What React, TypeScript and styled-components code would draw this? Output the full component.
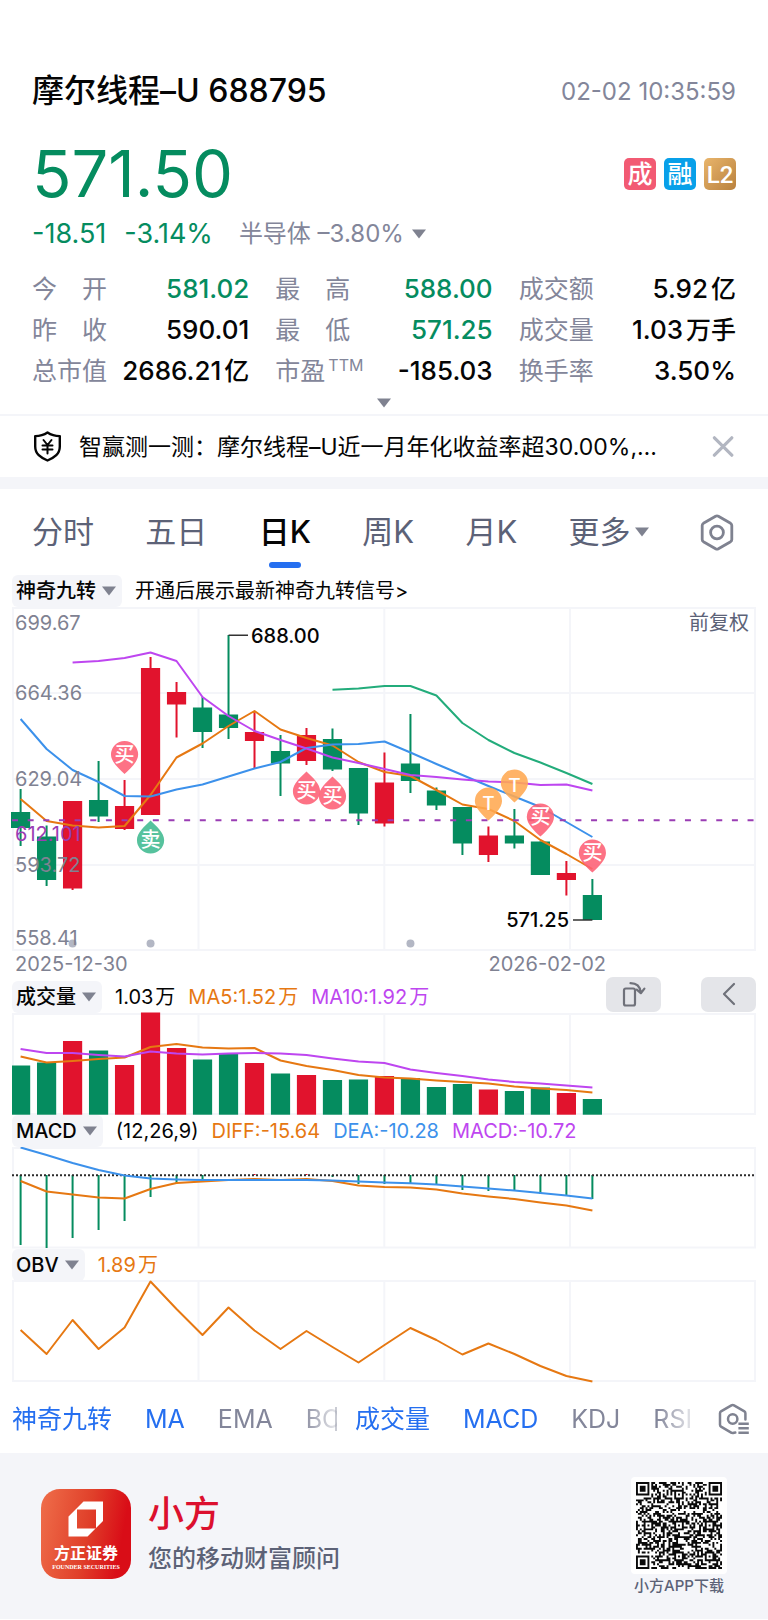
import React from "react";
import styled, { createGlobalStyle, css } from "styled-components";

const UP = "#e1132d";
const DOWN = "#058c5f";
const ORANGE = "#e67812";
const BLUE = "#3c91eb";
const PURPLE = "#be46f0";
const TEAL = "#23ac7b";
const GRAY = "#83869a";
const SLATE = "#5c6277";
const LINK = "#256ff0";
const GRID = "#f4f5f9";

const Global = createGlobalStyle`
  *, *::before, *::after { box-sizing: border-box; }
  body { margin: 0; background: #fff; }
  body, button, select {
    font-family: Inter, "Noto Sans CJK SC", sans-serif;
  }
  button, select {
    margin: 0; padding: 0; border: 0; background: none; color: inherit;
    font-size: inherit; line-height: inherit; font-weight: inherit; cursor: pointer;
  }
  h1, p, dl, dd, dt { margin: 0; font-weight: inherit; }
`;

const Page = styled.main`
  background: #fff;
  color: #050505;
`;

const Row = styled.div`
  display: flex;
  align-items: center;
  justify-content: space-between;
`;

/* ---------- quote header ---------- */

const Quote = styled.section`
  padding: 71px 32px 0;
`;

const StockName = styled.h1`
  font-size: 32px;
  line-height: 40px;
  font-weight: 500;
`;

const Stamp = styled.time`
  font-size: 24px;
  color: ${GRAY};
`;

const PriceRow = styled(Row)`
  margin-top: 27px;
`;

const Price = styled.p`
  font-size: 65px;
  line-height: 72px;
  color: ${DOWN};
`;

const Tags = styled.div`
  display: flex;
  gap: 8px;
`;

const Tag = styled.span<{ $bg: string; $narrow?: boolean }>`
  width: 32px;
  height: 32px;
  border-radius: 5px;
  background: ${(p) => p.$bg};
  color: #fff;
  font-size: 25px;
  line-height: 32px;
  font-weight: 500;
  text-align: center;
  ${(p) =>
    p.$narrow &&
    css`
      font-family: Roboto, sans-serif;
      font-size: 24px;
      line-height: 34px;
    `}
`;

const ChangeRow = styled.div`
  display: flex;
  align-items: center;
  margin-top: 7px;
  font-size: 27px;
  line-height: 34px;
  color: ${DOWN};
  gap: 18px;
`;

const Industry = styled.button`
  display: flex;
  align-items: center;
  gap: 8px;
  margin-left: 8px;
  font-size: 24px;
  color: ${GRAY};
`;

const Stats = styled.dl`
  display: grid;
  grid-template-columns: repeat(3, 1fr);
  gap: 5px 26px;
  margin-top: 20px;
`;

const Stat = styled.div`
  display: flex;
  justify-content: space-between;
  line-height: 36px;
  white-space: nowrap;
`;

const StatLabel = styled.dt`
  font-size: 25px;
  color: ${GRAY};
  sup {
    font-size: 16px;
    line-height: 0;
    margin-left: 3px;
  }
`;

const StatValue = styled.dd<{ $down?: boolean }>`
  font-size: 26px;
  font-weight: 500;
  color: ${(p) => (p.$down ? DOWN : "#050505")};
`;

const StatUnit = styled.span`
  font-size: 25px;
  margin-left: 3px;
`;

const Expand = styled.button`
  display: flex;
  align-items: center;
  justify-content: center;
  width: 100%;
  height: 25px;
  padding-top: 2px;
`;

/* ---------- notice ---------- */

const Notice = styled.aside`
  display: flex;
  align-items: center;
  height: 63px;
  padding: 0 34px 0 32px;
  border-top: 2px solid ${GRID};
`;

const NoticeText = styled.p`
  flex: 1;
  min-width: 0;
  margin: 0 40px 0 16px;
  font-size: 23px;
  line-height: 36px;
  white-space: nowrap;
  overflow: hidden;
  text-overflow: ellipsis;
`;

const IconButton = styled.button`
  display: flex;
  flex: none;
`;

const Strip = styled.hr`
  height: 12px;
  margin: 0;
  border: 0;
  background: ${GRID};
`;

/* ---------- period tabs ---------- */

const Tabs = styled.nav`
  display: flex;
  justify-content: space-between;
  padding: 21px 34px 7px 32px;
`;

const Tab = styled.button<{ $active?: boolean }>`
  position: relative;
  display: flex;
  align-items: center;
  gap: 4px;
  height: 58px;
  padding-bottom: 14px;
  font-size: 31px;
  line-height: 44px;
  color: ${SLATE};
  ${(p) =>
    p.$active &&
    css`
      color: #050505;
      font-weight: 500;
      &::after {
        content: "";
        position: absolute;
        left: calc(50% - 16px);
        bottom: 0;
        width: 32px;
        height: 6px;
        border-radius: 3px;
        background: ${LINK};
      }
    `}
`;

/* ---------- charts ---------- */

const Charts = styled.section`
  padding: 0 12px;
`;

const PanelHead = styled.div`
  display: flex;
  align-items: center;
  gap: 13px;
  height: 32px;
  font-size: 20px;
  line-height: 30px;
  white-space: nowrap;
`;

const Chip = styled.label`
  position: relative;
  display: flex;
  align-items: center;
  height: 32px;
  border-radius: 6px;
  background: ${GRID};
  select {
    appearance: none;
    field-sizing: content;
    height: 32px;
    padding: 0 26px 0 4px;
    font-size: 20px;
    font-weight: 500;
    color: #050505;
  }
  svg {
    position: absolute;
    right: 6px;
    pointer-events: none;
  }
`;

const Reading = styled.span<{ $color?: string }>`
  color: ${(p) => p.$color || "#050505"};
`;

const Unit = styled.span`
  margin-left: 2px;
`;

const Promo = styled.a`
  color: #050505;
  text-decoration: none;
`;

const ChartTools = styled.div`
  display: flex;
  gap: 40px;
  margin-left: auto;
`;

const ToolButton = styled.button`
  display: flex;
  align-items: center;
  justify-content: center;
  width: 55px;
  height: 35px;
  margin-top: -6px;
  border-radius: 7px;
  background: #e4e5e9;
`;

const Plot = styled.svg`
  display: block;
  width: 100%;
  height: auto;
  overflow: visible;
  font-family: Inter, "Noto Sans CJK SC", sans-serif;
`;

/* ---------- indicator picker ---------- */

const Picker = styled.div`
  display: grid;
  grid-template-columns: 17fr 18fr auto;
  align-items: center;
  height: 70px;
  padding: 2px 18px 0 12px;
  font-size: 25px;
  line-height: 36px;
`;

const PickerGroup = styled.div<{ $divided?: boolean }>`
  min-width: 0;
  ${(p) =>
    p.$divided
      ? css`
          margin-right: 18px;
          background: linear-gradient(#c9cbd3, #c9cbd3) right center / 2px 24px no-repeat;
        `
      : css`
          margin-right: 25px;
        `}
`;

const Scroller = styled.div`
  display: flex;
  gap: 33px;
  overflow: hidden;
  mask-image: linear-gradient(to right, #000 calc(100% - 36px), transparent calc(100% + 8px));
`;

const PickerItem = styled.button<{ $on?: boolean }>`
  flex: none;
  color: ${(p) => (p.$on ? LINK : GRAY)};
`;

/* ---------- footer ---------- */

const Footer = styled.footer`
  display: flex;
  align-items: flex-start;
  padding: 24px 41px 22px;
  background: ${GRID};
`;

const Logo = styled.div`
  display: flex;
  flex-direction: column;
  align-items: center;
  width: 90px;
  height: 90px;
  margin-top: 12px;
  padding-top: 12px;
  border-radius: 19px;
  background: linear-gradient(100deg, #ef6e4a, #e0402a 50%, #d90d17 85%);
  color: #fff;
`;

const LogoName = styled.span`
  margin-top: 6px;
  font-size: 16px;
  line-height: 20px;
  font-weight: 700;
`;

const LogoLatin = styled.span`
  font-family: "Liberation Serif", serif;
  font-size: 6px;
  line-height: 8px;
  font-weight: 700;
`;

const Brand = styled.div`
  margin: 16px 0 0 17px;
`;

const BrandName = styled.p`
  font-size: 36px;
  line-height: 42px;
  font-weight: 500;
  color: #dc102e;
`;

const Slogan = styled.p`
  margin-top: 8px;
  font-size: 24px;
  line-height: 32px;
  color: ${SLATE};
  font-weight: 500;
`;

const QrBlock = styled.div`
  display: flex;
  flex-direction: column;
  align-items: center;
  margin-left: auto;
`;

const QrFrame = styled.div`
  padding: 5px;
  border-radius: 4px;
  background: #fff;
  svg {
    display: block;
  }
`;

const QrCaption = styled.p`
  margin-top: 1px;
  font-size: 15px;
  line-height: 22px;
  font-weight: 500;
  color: ${SLATE};
`;

/* ---------- icons ---------- */

const Caret = () => (
  <svg width="14" height="10" viewBox="0 0 14 10" aria-hidden="true">
    <path d="M0 0.5h14L7 9.5z" fill="#7f8290" />
  </svg>
);

const ShieldIcon = () => (
  <svg width="31" height="32" viewBox="0 0 31 32" fill="none" stroke="#050505" strokeWidth="2.4" strokeLinejoin="round" strokeLinecap="round" aria-hidden="true">
    <path d="M15.5 1.5 C12 3.9 7.5 5.1 3.2 5.1 V15.5 C3.2 23 8.5 26.5 15.5 29.5 C22.5 26.5 27.8 23 27.8 15.5 V5.1 C23.5 5.1 19 3.9 15.5 1.5z" />
    <path d="M11.5 9l4 5 4-5M10.5 14.5h10M10.5 18.5h10M15.5 14.5v8" strokeWidth="2" />
  </svg>
);

const CloseIcon = () => (
  <svg width="22" height="22" viewBox="0 0 22 22" stroke="#b2b6c1" strokeWidth="3.2" strokeLinecap="round" aria-hidden="true">
    <path d="M2.4 1.8l17.4 17.4M19.8 1.8L2.4 19.2" />
  </svg>
);

const HexIcon = () => (
  <svg width="34" height="37" viewBox="0 0 34 37" fill="none" stroke="#7f8290" strokeWidth="2.8" strokeLinejoin="round" aria-hidden="true">
    <path d="M15.6 2.3 Q17 1.6 18.4 2.3 L30.6 9.3 Q31.8 10.1 31.8 11.5 V25.5 Q31.8 26.9 30.6 27.7 L18.4 34.7 Q17 35.4 15.6 34.7 L3.4 27.7 Q2.2 26.9 2.2 25.5 V11.5 Q2.2 10.1 3.4 9.3z" />
    <circle cx="17" cy="18.5" r="6.4" />
  </svg>
);

const HexListIcon = () => (
  <svg width="32" height="32" viewBox="0 0 32 32" fill="none" stroke="#7f8290" strokeWidth="2.5" strokeLinejoin="round" strokeLinecap="round" aria-hidden="true">
    <path d="M17.3 29.6 L15 30 L13.6 29.8 L3 23.6 Q2 23 2 21.8 V10.2 Q2 9 3 8.4 L13.4 2.3 Q14.7 1.6 16 2.3 L26.4 8.4 Q27.4 9 27.4 10.2 V16.5" />
    <circle cx="14.7" cy="16" r="4.7" />
    <path d="M20.4 20.8h10.4M20.4 25.3h10.4M20.4 29.8h10.4" strokeWidth="2.4" strokeLinecap="butt" />
  </svg>
);

const RotateIcon = () => (
  <svg width="24" height="27" viewBox="0 0 24 27" fill="none" stroke="#6f717a" strokeWidth="2.2" strokeLinejoin="round" strokeLinecap="round" aria-hidden="true">
    <rect x="2" y="7.5" width="11" height="17" rx="1.8" />
    <path d="M8.5 2.2c6 0 9.5 3 10.2 9.2M14.8 8.6l4 3.6 3.6-4.6" />
  </svg>
);

const BackIcon = () => (
  <svg width="14" height="24" viewBox="0 0 14 24" fill="none" stroke="#6f717a" strokeWidth="2.2" strokeLinejoin="round" strokeLinecap="round" aria-hidden="true">
    <path d="M12 2L2 12l10 10" />
  </svg>
);

/* ---------- chart data ---------- */

const cx = (i: number) => 20.6 + 25.99 * i;
const poly = (ys: number[], from = 0) => ys.map((y, k) => `${cx(k + from).toFixed(1)},${y}`).join(" ");

// [rising, high, low, body top, body bottom]
const CANDLES: [number, number, number, number, number][] = [
  [0, 789, 846, 812, 828], [0, 825.5, 886, 836.5, 880], [1, 801, 890, 801, 888.5],
  [0, 761, 822, 800, 816.5], [1, 780, 830, 806, 829], [1, 657, 815, 668, 815],
  [1, 682, 737.5, 692, 704.5], [0, 697, 748, 707.5, 732], [0, 635, 739, 714.5, 728],
  [1, 712, 768, 732, 741], [0, 735, 796, 751, 763.5], [1, 728, 765, 735, 761],
  [0, 728.5, 771, 739, 769.5], [0, 768, 825, 768, 813.5], [1, 752.5, 826.5, 782.5, 823.5],
  [0, 714, 793, 763.5, 781], [0, 787.5, 810, 790.5, 805.5], [0, 807, 855, 807, 843.5],
  [1, 826.5, 862, 835.5, 855], [0, 809, 848.5, 835.5, 843.5], [0, 841.5, 875, 841.5, 875],
  [1, 861, 895.5, 873, 880], [0, 879, 920, 895, 920],
];
const MA5 = [799, 821, 825.5, 827.5, 826, 795, 757.5, 743.5, 726, 711, 729.5, 738, 745.5, 762, 772, 776, 790, 804.5, 809, 821, 840, 854, 869];
const MA10 = [719, 749, 770, 782, 796, 796.5, 789.5, 784.5, 776.5, 768.5, 762, 748, 744.5, 744, 741.5, 752.5, 764, 775, 786, 796.5, 807, 822, 837];
const MA20 = [662.5, 661, 658, 652.5, 661, 697, 716, 731, 740, 748.5, 757.5, 763, 769, 775, 777, 779.5, 781.5, 782.5, 785, 784.5, 790.5];
const MA60 = [689.7, 688.5, 686, 686, 695.5, 723, 740, 753, 762.5, 773, 784];

const VOL = [1065.5, 1062.5, 1041, 1050.5, 1065, 1012.5, 1048, 1059.5, 1054, 1063, 1073.5, 1075, 1080, 1079.5, 1076, 1078, 1087, 1084, 1089.5, 1091, 1087.5, 1093, 1099];
const VOL5 = [1056.5, 1062.5, 1061, 1059, 1057.5, 1047, 1044, 1047.5, 1048.5, 1048, 1060.5, 1066, 1070, 1075, 1077.5, 1078.5, 1080.5, 1082, 1083.5, 1086.5, 1088.5, 1090, 1092.5];
const VOL10 = [1049, 1053, 1053, 1055, 1056.5, 1051.5, 1053.5, 1054.5, 1053.5, 1053, 1053.5, 1055, 1058.5, 1061.5, 1063, 1069.5, 1073, 1076, 1079.5, 1082, 1083.5, 1085.5, 1087.5];

const HIST = [1245, 1248, 1238, 1230, 1221, 1197, 1183.5, 1180, 1175, 1174, 1175, 1174, 1177, 1184, 1184, 1183, 1184, 1190, 1191, 1191, 1194, 1195.5, 1199];
const DIFF = [1181, 1191.5, 1194.5, 1197.5, 1198.5, 1189, 1183, 1181.5, 1180, 1179, 1180, 1179, 1181, 1185.5, 1187, 1187.5, 1189.5, 1193.5, 1196.5, 1199, 1202.5, 1205.5, 1210.5];
const DEA = [1147.5, 1155, 1163, 1170, 1175.5, 1178.5, 1179.5, 1180, 1180, 1180, 1180, 1180, 1180.5, 1181.5, 1182.5, 1183.3, 1184.5, 1186.5, 1188.5, 1190.5, 1193, 1195.5, 1198.5];

const OBV = [1330, 1354, 1320, 1349, 1327.5, 1281.5, 1309, 1335, 1307.5, 1330.5, 1349, 1331, 1347, 1362.5, 1345, 1328, 1340, 1354.5, 1343.5, 1354, 1366, 1376, 1381.5];

// [candle, centre y of the disc, label, colour, points up]
const PINS: [number, number, string, string, boolean][] = [
  [4, 754.5, "买", "#fd5f74", false],
  [5, 840, "卖", "#3fba90", true],
  [11, 791, "买", "#fd5f74", true],
  [12, 796, "买", "#fd5f74", true],
  [18, 801, "T", "#ffa851", false],
  [19, 783, "T", "#ffa851", false],
  [20, 817, "买", "#fd5f74", false],
  [22, 853, "买", "#fd5f74", false],
];

const Frame = ({ top, bottom, rows = [] }: { top: number; bottom: number; rows?: number[] }) => (
  <g stroke={GRID} strokeWidth="2" fill="none">
    <rect x="13" y={top} width="742" height={bottom - top} />
    <path d={[198.5, 384.3, 570].map((x) => `M${x} ${top}V${bottom}`).join("") + rows.map((y) => `M13 ${y}H755`).join("")} />
  </g>
);

const Line = ({ ys, color, from = 0 }: { ys: number[]; color: string; from?: number }) => (
  <polyline points={poly(ys, from)} fill="none" stroke={color} strokeWidth="2" strokeLinejoin="round" />
);

const PriceChart = () => (
  <Plot viewBox="12 607 744 374" role="img" aria-label="日K线图">
    <Frame top={608} bottom={950} rows={[693, 779, 865]} />
    {CANDLES.map(([rise, hi, lo, t, b], i) => (
      <g key={i} fill={rise ? UP : DOWN}>
        <rect x={cx(i) - 1} y={hi} width="2" height={lo - hi} />
        <rect x={cx(i) - 9.6} y={t} width="19.2" height={b - t} />
      </g>
    ))}
    <Line ys={MA5} color={ORANGE} />
    <Line ys={MA10} color={BLUE} />
    <Line ys={MA20} color={PURPLE} from={2} />
    <Line ys={MA60} color={TEAL} from={12} />
    <path d="M12 820.3H756" stroke="#9a3db4" strokeWidth="2" strokeDasharray="6 9.65" />
    <g fill="#b3b7c4">
      {[2, 5, 15].map((i) => (
        <circle key={i} cx={cx(i)} cy="943.5" r="4" />
      ))}
    </g>
    {PINS.map(([i, y, label, color, up]) => (
      <g key={i} transform={`translate(${cx(i)} ${y})`}>
        <path
          d="M-13.6 0A13.6 13.6 0 1 1 13.6 0C13.6 7 6 14 0 19.6C-6 14 -13.6 7 -13.6 0z"
          transform={up ? "scale(1 -1)" : undefined}
          fill={color}
          fillOpacity="0.88"
        />
        <text y={label === "T" ? 9 : 7} textAnchor="middle" fontSize={label === "T" ? 19 : 20} fontWeight="500" fill="#fff">
          {label}
        </text>
      </g>
    ))}
    <g fontSize="20" fill="#7f8292">
      <text x="15" y="630">699.67</text>
      <text x="15" y="700">664.36</text>
      <text x="15" y="786">629.04</text>
      <text x="15" y="872">593.72</text>
      <text x="15" y="945">558.41</text>
      <text x="15" y="971">2025-12-30</text>
      <text x="606" y="971" textAnchor="end">2026-02-02</text>
      <text x="15" y="841" fill="#9a3db4">612.101</text>
      <text x="749" y="630" textAnchor="end" fill={SLATE}>前复权</text>
    </g>
    <path d="M228.6 635.3H248M573 920H592.4" stroke="#333" strokeWidth="1.4" />
    <g fontSize="20" fontWeight="500" fill="#050505">
      <text x="251" y="643">688.00</text>
      <text x="569" y="927" textAnchor="end">571.25</text>
    </g>
  </Plot>
);

const VolumeChart = () => (
  <Plot viewBox="12 1013 744 102" role="img" aria-label="成交量图">
    <Frame top={1014} bottom={1114} />
    {VOL.map((y, i) => {
      const left = Math.max(12, cx(i) - 9.6);
      return <rect key={i} x={left} y={y} width={cx(i) + 9.6 - left} height={1114.7 - y} fill={CANDLES[i][0] ? UP : DOWN} />;
    })}
    <Line ys={VOL5} color={ORANGE} />
    <Line ys={VOL10} color={PURPLE} />
  </Plot>
);

const MacdChart = () => (
  <Plot viewBox="12 1147 744 102" role="img" aria-label="MACD图">
    <Frame top={1148} bottom={1247.5} />
    {HIST.map((y, i) => (
      <path key={i} d={`M${cx(i)} 1175V${y}`} stroke={y < 1175 ? UP : DOWN} strokeWidth="2" />
    ))}
    <path d="M12 1175.3H756" stroke="#2b2b2b" strokeWidth="2" strokeDasharray="2 2" />
    <Line ys={DIFF} color={ORANGE} />
    <Line ys={DEA} color={BLUE} />
  </Plot>
);

const ObvChart = () => (
  <Plot viewBox="12 1281 744 102" role="img" aria-label="OBV图">
    <Frame top={1281} bottom={1381} />
    <Line ys={OBV} color={ORANGE} />
  </Plot>
);

/* ---------- QR code ---------- */

const QR_SIZE = 45;

const qrPath = () => {
  const n = QR_SIZE;
  const cells: boolean[][] = [];
  let seed = 688795;
  for (let y = 0; y < n; y++) {
    cells.push([]);
    for (let x = 0; x < n; x++) {
      seed = (seed * 1103515245 + 12345) % 2147483648;
      cells[y].push(seed / 2147483648 > 0.49);
    }
  }
  for (let k = 0; k < n; k++) {
    cells[6][k] = cells[k][6] = k % 2 === 0;
  }
  const square = (ox: number, oy: number, r: number, dark: (d: number) => boolean) => {
    for (let y = -r; y <= r; y++) {
      for (let x = -r; x <= r; x++) {
        const row = cells[oy + y];
        if (row && ox + x >= 0 && ox + x < n) row[ox + x] = dark(Math.max(Math.abs(x), Math.abs(y)));
      }
    }
  };
  [[3, 3], [n - 4, 3], [3, n - 4]].forEach(([x, y]) => square(x, y, 4, (d) => d !== 2 && d !== 4));
  [[22, 6], [6, 22], [22, 22], [38, 22], [22, 38], [38, 38]].forEach(([x, y]) => square(x, y, 2, (d) => d !== 1));
  let d = "";
  for (let y = 0; y < n; y++) {
    for (let x = 0; x < n; x++) {
      if (!cells[y][x]) continue;
      let end = x;
      while (end < n && cells[y][end]) end++;
      d += `M${x} ${y}h${end - x}v1h${x - end}z`;
      x = end;
    }
  }
  return d;
};

const QrCode = () => (
  <svg width="86" height="87" viewBox="0 0 45 45" preserveAspectRatio="none" role="img" aria-label="小方APP下载二维码">
    <path d={qrPath()} fill="#0a0a0a" />
  </svg>
);

/* ---------- page ---------- */

type StatItem = { label: React.ReactNode; value: string; unit?: string; down?: boolean };

const STATS: StatItem[] = [
  { label: "今　开", value: "581.02", down: true },
  { label: "最　高", value: "588.00", down: true },
  { label: "成交额", value: "5.92", unit: "亿" },
  { label: "昨　收", value: "590.01" },
  { label: "最　低", value: "571.25", down: true },
  { label: "成交量", value: "1.03", unit: "万手" },
  { label: "总市值", value: "2686.21", unit: "亿" },
  { label: <>市盈<sup>TTM</sup></>, value: "-185.03" },
  { label: "换手率", value: "3.50%" },
];

const IndicatorSelect = ({ name, options }: { name: string; options: string[] }) => (
  <Chip>
    <select aria-label={name} defaultValue={options[0]}>
      {options.map((o) => (
        <option key={o}>{o}</option>
      ))}
    </select>
    <Caret />
  </Chip>
);

export default function App() {
  return (
    <Page>
      <Global />
      <Quote>
        <Row>
          <StockName>摩尔线程–U 688795</StockName>
          <Stamp>02-02 10:35:59</Stamp>
        </Row>
        <PriceRow>
          <Price>571.50</Price>
          <Tags>
            <Tag $bg="#f25a73">成</Tag>
            <Tag $bg="#08a0e9">融</Tag>
            <Tag $bg="linear-gradient(135deg, #e9b56c, #b9813d)" $narrow>L2</Tag>
          </Tags>
        </PriceRow>
        <ChangeRow>
          <span>-18.51</span>
          <span>-3.14%</span>
          <Industry type="button" aria-haspopup="menu">
            半导体 –3.80%
            <Caret />
          </Industry>
        </ChangeRow>
        <Stats>
          {STATS.map((s) => (
            <Stat key={s.value}>
              <StatLabel>{s.label}</StatLabel>
              <StatValue $down={s.down}>
                {s.value}
                {s.unit && <StatUnit>{s.unit}</StatUnit>}
              </StatValue>
            </Stat>
          ))}
        </Stats>
        <Expand type="button" aria-label="展开">
          <Caret />
        </Expand>
      </Quote>

      <Notice>
        <ShieldIcon />
        <NoticeText>智赢测一测：摩尔线程–U近一月年化收益率超30.00%,…</NoticeText>
        <IconButton type="button" aria-label="关闭">
          <CloseIcon />
        </IconButton>
      </Notice>
      <Strip />

      <Tabs>
        <Tab type="button">分时</Tab>
        <Tab type="button">五日</Tab>
        <Tab type="button" $active>日K</Tab>
        <Tab type="button">周K</Tab>
        <Tab type="button">月K</Tab>
        <Tab type="button" aria-haspopup="menu">
          更多
          <Caret />
        </Tab>
        <Tab type="button" aria-label="图表设置">
          <HexIcon />
        </Tab>
      </Tabs>

      <Charts>
        <PanelHead>
          <IndicatorSelect name="主图指标" options={["神奇九转", "MA", "EMA", "BOLL"]} />
          <Promo href="#signals">开通后展示最新神奇九转信号&gt;</Promo>
        </PanelHead>
        <PriceChart />

        <PanelHead>
          <IndicatorSelect name="副图指标一" options={["成交量", "MACD", "KDJ"]} />
          <Reading>1.03<Unit>万</Unit></Reading>
          <Reading $color={ORANGE}>MA5:1.52<Unit>万</Unit></Reading>
          <Reading $color={PURPLE}>MA10:1.92<Unit>万</Unit></Reading>
          <ChartTools>
            <ToolButton type="button" aria-label="横屏">
              <RotateIcon />
            </ToolButton>
            <ToolButton type="button" aria-label="收起">
              <BackIcon />
            </ToolButton>
          </ChartTools>
        </PanelHead>
        <VolumeChart />

        <PanelHead>
          <IndicatorSelect name="副图指标二" options={["MACD", "成交量", "KDJ"]} />
          <Reading>(12,26,9)</Reading>
          <Reading $color={ORANGE}>DIFF:-15.64</Reading>
          <Reading $color={BLUE}>DEA:-10.28</Reading>
          <Reading $color={PURPLE}>MACD:-10.72</Reading>
        </PanelHead>
        <MacdChart />

        <PanelHead>
          <IndicatorSelect name="副图指标三" options={["OBV", "MACD", "KDJ"]} />
          <Reading $color={ORANGE}>1.89<Unit>万</Unit></Reading>
        </PanelHead>
        <ObvChart />
      </Charts>

      <Picker>
        <PickerGroup $divided>
          <Scroller>
            <PickerItem type="button" $on>神奇九转</PickerItem>
            <PickerItem type="button" $on>MA</PickerItem>
            <PickerItem type="button">EMA</PickerItem>
            <PickerItem type="button">BOLL</PickerItem>
          </Scroller>
        </PickerGroup>
        <PickerGroup>
          <Scroller>
            <PickerItem type="button" $on>成交量</PickerItem>
            <PickerItem type="button" $on>MACD</PickerItem>
            <PickerItem type="button">KDJ</PickerItem>
            <PickerItem type="button">RSI</PickerItem>
          </Scroller>
        </PickerGroup>
        <IconButton type="button" aria-label="指标设置">
          <HexListIcon />
        </IconButton>
      </Picker>

      <Footer>
        <Logo>
          <svg width="36" height="36" viewBox="0 0 36 36" aria-hidden="true">
            <path fillRule="evenodd" fill="#fff" d="M15.5 0.5H35V20L19.5 35.5H0.5V15.5z M9 8.5V27.5H28V8.5z" />
          </svg>
          <LogoName>方正证券</LogoName>
          <LogoLatin>FOUNDER SECURITIES</LogoLatin>
        </Logo>
        <Brand>
          <BrandName>小方</BrandName>
          <Slogan>您的移动财富顾问</Slogan>
        </Brand>
        <QrBlock>
          <QrFrame>
            <QrCode />
          </QrFrame>
          <QrCaption>小方APP下载</QrCaption>
        </QrBlock>
      </Footer>
    </Page>
  );
}
